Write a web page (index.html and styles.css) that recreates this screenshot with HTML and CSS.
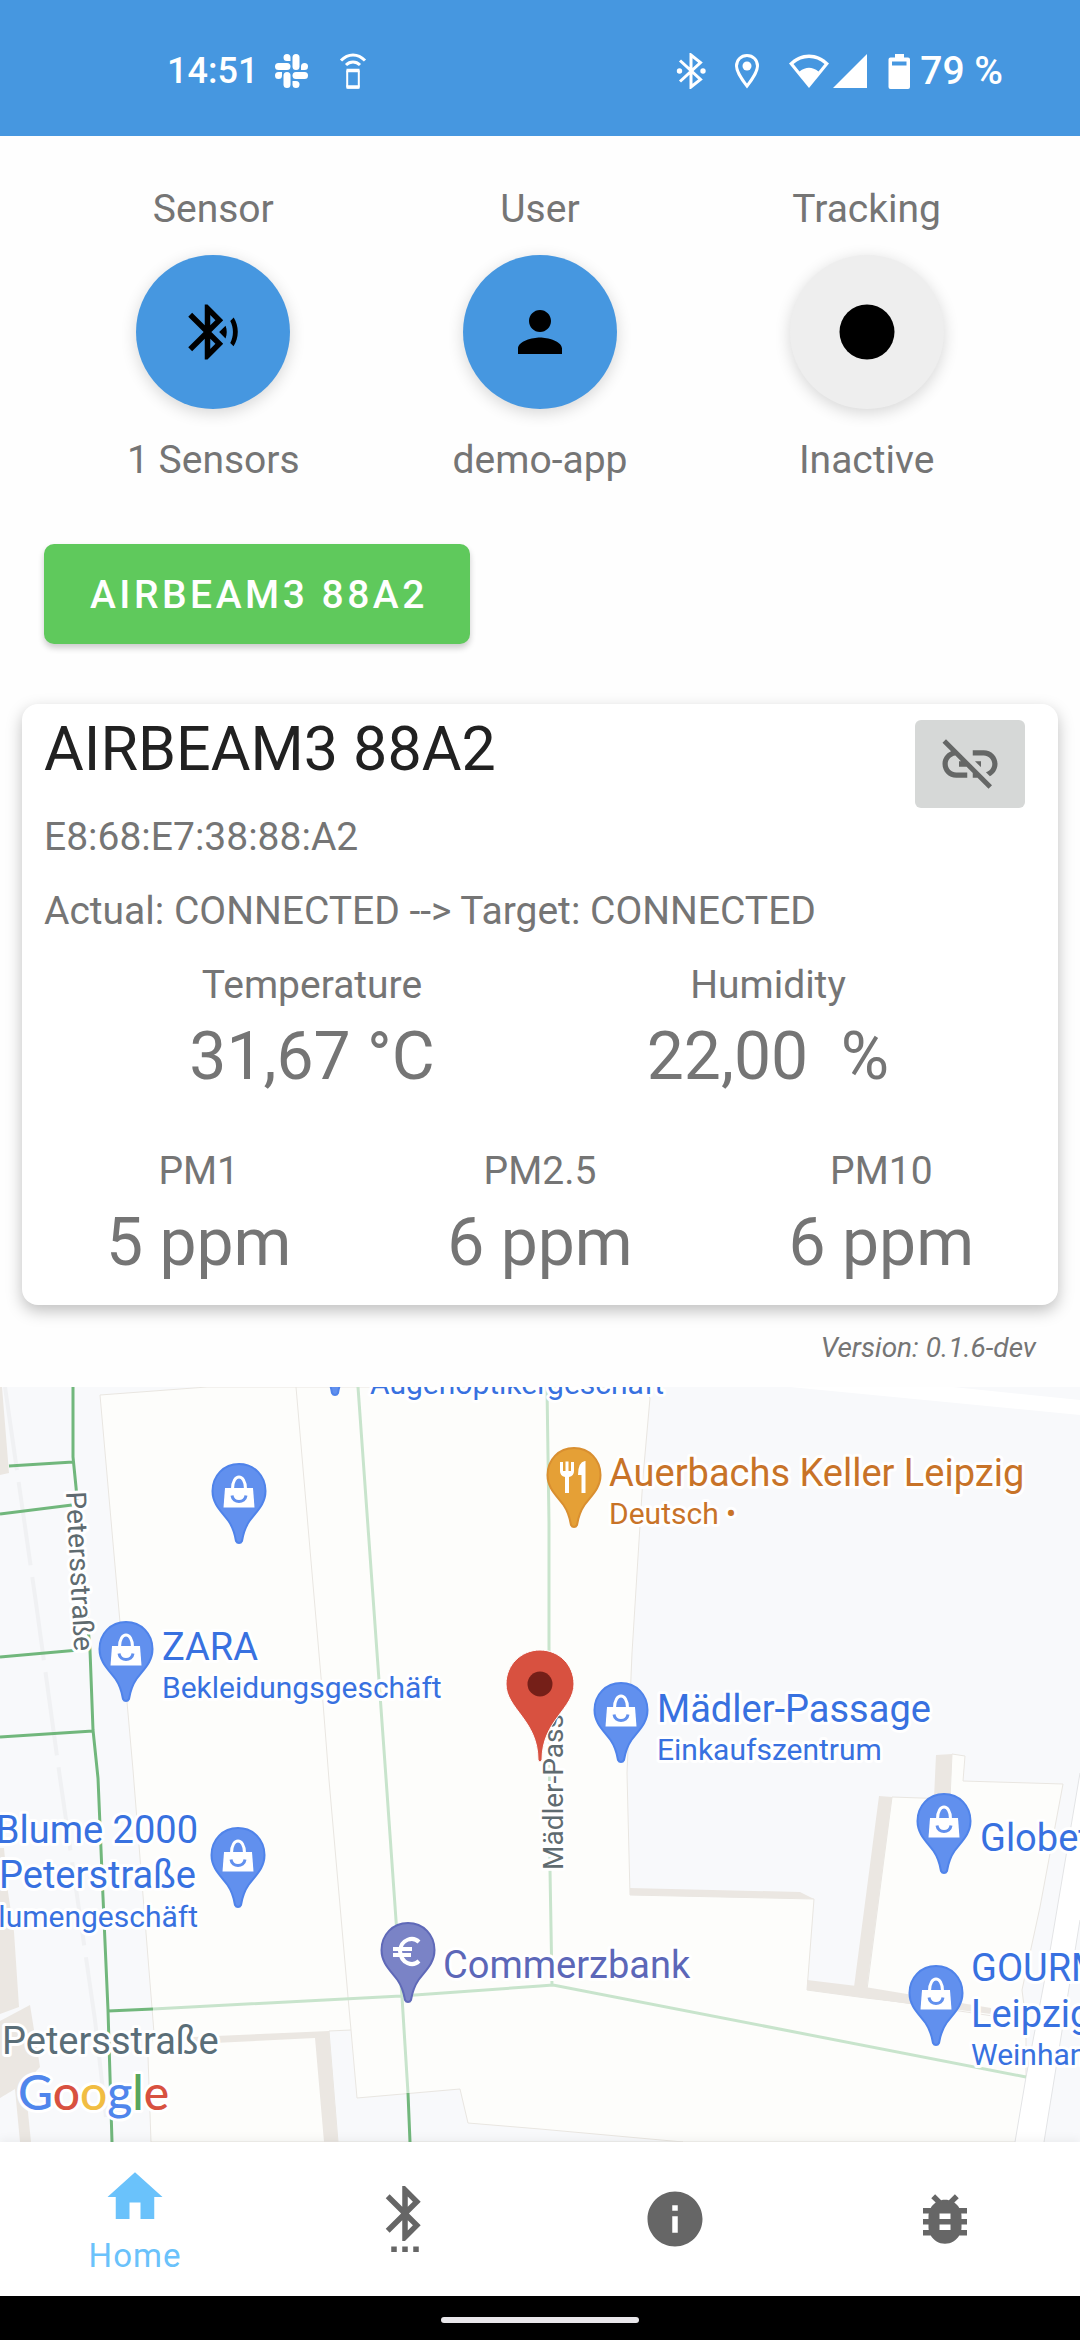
FILE: index.html
```html
<!DOCTYPE html>
<html lang="en">
<head>
<meta charset="utf-8">
<meta name="viewport" content="width=device-width, initial-scale=1">
<title>AirBeam sensors</title>
<link rel="stylesheet" href="styles.css">
</head>
<body>
<header class="statusbar">
  <div class="status-left">
    <span class="clock">14:51</span>
    <svg class="slack" width="35" height="36" viewBox="0 0 35 36" fill="#fff" aria-hidden="true">
      <path d="M13 1a3.500 3.500 0 0 1 3.500 3.500V8H13a3.500 3.500 0 0 1 0-7z"/>
      <rect x="1" y="10" width="15.500" height="7" rx="3.500"/>
      <rect x="18.500" y="1" width="7" height="16" rx="3.500"/>
      <path d="M34 13.500a3.500 3.500 0 0 1-3.500 3.500H27v-3.500a3.500 3.500 0 0 1 7 0z"/>
      <rect x="18.500" y="19" width="15.500" height="7" rx="3.500"/>
      <path d="M22 35a3.500 3.500 0 0 1-3.500-3.500V28H22a3.500 3.500 0 0 1 0 7z"/>
      <rect x="9.500" y="19" width="7" height="16" rx="3.500"/>
      <path d="M1 22.500A3.500 3.500 0 0 1 4.500 19H8v3.500a3.500 3.500 0 0 1-7 0z"/>
    </svg>
    <svg class="remote" width="28" height="38" viewBox="0 0 28 38" fill="none" stroke="#fff" aria-hidden="true">
      <path stroke-width="3" d="M2 8.500C9 1 19 1 26 8.500M7 13C11 9 17 9 21 13"/>
      <rect x="8.200" y="18.500" width="11.600" height="17" rx="1" stroke-width="2"/>
      <path stroke-width="3.500" d="M7.500 18.500h13M7.500 35h13"/>
    </svg>
  </div>
  <div class="status-right">
    <svg width="30" height="36" viewBox="0 0 30 36" aria-hidden="true">
      <path d="M4 7.500 24.500 26.500 15 34V2l9.500 7.500L4 28.500" fill="none" stroke="#fff" stroke-width="3"/>
      <circle cx="3.500" cy="18" r="2.700" fill="#fff"/><circle cx="27" cy="18" r="2.700" fill="#fff"/>
    </svg>
    <svg width="26" height="36" viewBox="0 0 26 36" aria-hidden="true">
      <path d="M13 2.500c-6 0-10.500 4.500-10.500 10.500C2.500 20 13 33 13 33s10.500-13 10.500-20c0-6-4.500-10.500-10.500-10.500z" fill="none" stroke="#fff" stroke-width="3"/>
      <circle cx="13" cy="13" r="4.500" fill="#fff"/>
    </svg>
    <svg width="80" height="36" viewBox="0 0 80 36" aria-hidden="true">
      <path d="M1 10.500C13-1.500 29-1.500 41 10.500L21 35z" fill="#fff"/>
      <path d="M5.500 11C14 3 28 3 36.500 11L30.500 18.500C24 13.500 18 13.500 11.500 18.500z" fill="#4697e0"/>
      <path d="M79 1v34H45z" fill="#fff"/>
    </svg>
    <svg class="battery" width="22" height="36" viewBox="0 0 22 36" aria-hidden="true">
      <path d="M7 1h9v3.500h4q2 0 2 2V34q0 2-2 2H2.500q-2 0-2-2V6.500q0-2 2-2H7z" fill="#fff"/>
      <path d="M4 8.500h14.500v4H4z" fill="#4697e0"/>
    </svg>
    <span class="charge">79 %</span>
  </div>
</header>

<main class="content">
  <section class="controls">
    <div class="control">
      <span id="sensor-label">Sensor</span>
      <button class="round" type="button" aria-labelledby="sensor-label">
        <svg class="icon" viewBox="0 0 24 24"><path d="M14.240 12.010l2.320 2.320c.28-.72.44-1.510.44-2.330 0-.82-.16-1.590-.43-2.310l-2.330 2.320zm5.290-5.300l-1.260 1.260c.63 1.210.98 2.570.98 4.020s-.36 2.820-.98 4.020l1.200 1.200c.97-1.540 1.540-3.360 1.540-5.310-.01-1.890-.55-3.670-1.480-5.190zm-3.820 1L10 2H9v7.590L4.410 5 3 6.410 8.590 12 3 17.590 4.410 19 9 14.410V22h1l5.710-5.710-4.300-4.290 4.300-4.290zM11 5.830l1.880 1.880L11 9.590V5.830zm1.880 10.460L11 18.170v-3.760l1.880 1.880z"/></svg>
      </button>
      <span>1 Sensors</span>
    </div>
    <div class="control">
      <span id="user-label">User</span>
      <button class="round" type="button" aria-labelledby="user-label">
        <svg class="icon" viewBox="0 0 24 24"><path d="M12 12c2.210 0 4-1.790 4-4s-1.790-4-4-4-4 1.790-4 4 1.790 4 4 4zm0 2c-2.670 0-8 1.340-8 4v2h16v-2c0-2.660-5.330-4-8-4z"/></svg>
      </button>
      <span>demo-app</span>
    </div>
    <div class="control">
      <span id="tracking-label">Tracking</span>
      <button class="round round-off" type="button" aria-labelledby="tracking-label">
        <svg class="icon" viewBox="0 0 24 24"><circle cx="12" cy="12" r="10"/></svg>
      </button>
      <span>Inactive</span>
    </div>
  </section>

  <button class="sensor-button" type="button">AIRBEAM3 88A2</button>

  <article class="card">
    <div class="card-head">
      <h1 class="title">AIRBEAM3 88A2</h1>
      <button class="unlink" type="button" aria-label="Disconnect">
        <svg class="icon" viewBox="0 0 24 24"><path d="M17 7h-4v1.900h4c1.710 0 3.100 1.390 3.100 3.100 0 1.430-.98 2.630-2.310 2.980l1.460 1.460C20.880 15.610 22 13.950 22 12c0-2.760-2.240-5-5-5zm-1 4h-2.190l2 2H16v-2zM2 4.270l3.110 3.110C3.290 8.120 2 9.910 2 12c0 2.760 2.240 5 5 5h4v-1.900H7c-1.710 0-3.100-1.390-3.100-3.100 0-1.590 1.210-2.900 2.760-3.070L8.730 11H8v2h2.730L13 15.270V17h1.730l4.010 4L20 19.740 3.270 3 2 4.270z"/></svg>
      </button>
    </div>
    <p class="line">E8:68:E7:38:88:A2</p>
    <p class="line">Actual: CONNECTED --&gt; Target: CONNECTED</p>
    <div class="climate">
      <div class="reading"><span>Temperature</span><span class="value">31,67 °C</span></div>
      <div class="reading"><span>Humidity</span><span class="value">22,00&nbsp; %</span></div>
    </div>
    <div class="particles">
      <div class="reading"><span>PM1</span><span class="value">5 ppm</span></div>
      <div class="reading"><span>PM2.5</span><span class="value">6 ppm</span></div>
      <div class="reading"><span>PM10</span><span class="value">6 ppm</span></div>
    </div>
  </article>
  <p class="version">Version: 0.1.6-dev</p>
</main>

<svg class="map" viewBox="0 0 1080 755" preserveAspectRatio="xMidYMid slice" role="img" aria-label="Map">
  <defs>
    <path id="drop" d="M0 1C15.500 1 26.500 13 26.500 28 26.500 41 18 48 10.500 58 5 66 4 72 3 78Q2 80 0 80 -2 80-3 78C-4 72-5 66-10.500 58-18 48-26.500 41-26.500 28-26.500 13-15.500 1 0 1Z" stroke-width="2"/>
    <g id="shop">
      <use href="#drop" fill="#6190ee" stroke="#4f83ea"/>
      <path d="M-14 25H14L15.500 44.500H-15.500Z" fill="#fff"/>
      <path d="M-6.500 26C-6.500 10 6.500 10 6.500 26" fill="none" stroke="#fff" stroke-width="3"/>
      <path d="M-7 32.500C-6 40.500 6 40.500 7 32.500" fill="none" stroke="#6190ee" stroke-width="3"/>
    </g>
  </defs>
  <rect width="1080" height="755" fill="#f8f9fb"/>
  <!-- buildings -->
  <g fill="#fdfdfb" stroke="#e9e6e1">
    <path d="M100 8 207 0H640L650 11 643 90 632 266 627 386 630 508 814 512 807 603 866 611 1026 630V755H151L148 670 154 646 133 383Z"/>
    <path d="M952 367 965 369 963 394 1063 397 1040 520 1022 603 1026 634 866 610 892 410 950 412Z"/>
    <path d="M296 0 321 290 329 393 348 610 351 643" fill="none"/>
    <path d="M338 755 329 644 351 643 357 711 460 702 468 736 540 742 683 755Z" fill="#f8f9fb"/>
  </g>
  <g fill="#ebe7e2">
    <path d="M193 650 329 644 338 755H324L315 651 193 657Z"/>
    <path d="M630 501 800 505 814 512 630 508ZM879 409 892 410 866 607 854 600ZM936 368 952 367 950 412 934 411Z"/>
    <path d="M807 593 865 600 991 621V627L866 611 807 603Z"/>
    <path d="M0 0H2L9 86 0 88ZM0 461H4L8 505 14 545 19 620 0 627ZM0 634 30 618 40 680 25 696 31 755H20L15 702 0 711Z"/>
  </g>
  <!-- roads -->
  <g fill="#fff">
    <path d="M790 0H953L1080 13V28Z"/>
    <path d="M1080 386 1049 570 1026 690 1015 755H1044L1080 533Z"/>
    <path d="M1080 386 1049 570 1026 690 1015 755M1044 755 1080 533" fill="none" stroke="#e3e4e6"/>
  </g>
  <path d="M5 0 36 216 60 391 95 633 106 730" fill="none" stroke="#f0f1f3" stroke-width="4" stroke-dasharray="84 12"/>
  <!-- footpaths -->
  <g fill="none" stroke="#71b77c" stroke-width="3">
    <path d="M73 0V70L76 100 90 263 93 343 98 391 103 510 108 623 112 755M9 79 73 75M0 127 72 118M0 270 90 262M0 350 93 344M108 624 153 622M408 706 410 755"/>
    <path stroke="#c8e4cc" d="M153 622 401 609 540 599 553 598 1026 690M358 0 368 140 386 391 396 533 402 610 408 706M547 0 549 136V260L550 483 552 598"/>
  </g>
  <g class="street">
    <text class="street-small" transform="translate(66 105) rotate(87)">Petersstraße</text>
    <text class="street-small" transform="translate(563 483) rotate(-90)">Mädler-Passage</text>
    <text class="street-name" x="2" y="667">Petersstraße</text>
  </g>
  <!-- places -->
  <use href="#shop" x="335" y="-72"/>
  <use href="#shop" x="239" y="76"/>
  <use href="#shop" x="126" y="234"/>
  <use href="#shop" x="238" y="440"/>
  <use href="#shop" x="621" y="295"/>
  <use href="#shop" x="944" y="406"/>
  <use href="#shop" x="936" y="578"/>
  <g transform="translate(574 60)">
    <use href="#drop" fill="#e5a036" stroke="#d98f30"/>
    <path d="M-14 15v9q0 5 5 6v16h4V30q5-1 5-6v-9h-3v9h-2.500v-9.500h-3V24H-11v-9zM11 14q-7 1-7 14h3.500v18h4V14z" fill="#fff"/>
  </g>
  <g transform="translate(408 535)">
    <use href="#drop" fill="#7a83c6" stroke="#5f69b8"/>
    <path d="M11 20C5 14-7 17-8 29-7 42 5 45 11 39M-15 27H4M-15 33H3" fill="none" stroke="#fff" stroke-width="4"/>
  </g>
  <g class="place">
    <text class="place-kind" x="370" y="7">Augenoptikergeschäft</text>
    <text x="162" y="273">ZARA</text>
    <text class="place-kind" x="162" y="311">Bekleidungsgeschäft</text>
    <text x="657" y="335">Mädler-Passage</text>
    <text class="place-kind" x="657" y="373">Einkaufszentrum</text>
    <g text-anchor="end">
      <text x="198" y="456">Blume 2000</text>
      <text x="196" y="501">Peterstraße</text>
      <text class="place-kind" x="198" y="540">Blumengeschäft</text>
    </g>
    <text x="980" y="464">Globetrotter</text>
    <text x="971" y="594">GOURMET</text>
    <text x="971" y="640">Leipzig</text>
    <text class="place-kind" x="971" y="678">Weinhandlung</text>
    <text class="bank" x="443" y="591">Commerzbank</text>
    <text class="food" x="609" y="99">Auerbachs Keller Leipzig</text>
    <text class="food place-kind" x="609" y="137">Deutsch •</text>
  </g>
  <path d="M540 263c19 0 34 15 34 34 0 25-32 36-32 76q-2 4-4 0c0-40-32-51-32-76 0-19 15-34 34-34z" fill="#d85140" stroke="#fff"/>
  <circle cx="540" cy="297" r="12.500" fill="#751f18"/>
  <text class="google" x="18" y="723"><tspan fill="#5086ec">G</tspan><tspan fill="#d85140">o</tspan><tspan fill="#f1bd42">o</tspan><tspan fill="#5086ec">g</tspan><tspan fill="#58a65c">l</tspan><tspan fill="#d85140">e</tspan></text>
</svg>

<nav class="tabs">
  <a class="tab tab-active" href="#home">
    <svg class="icon" viewBox="0 0 24 24" aria-hidden="true"><path d="M10 20v-6h4v6h5v-8h3L12 3 2 12h3v8z"/></svg>
    <span>Home</span>
  </a>
  <a class="tab" href="#bluetooth" aria-label="Bluetooth">
    <svg class="icon" viewBox="0 0 24 24"><path d="M11 24h2v-2h-2v2zm-4 0h2v-2H7v2zm8 0h2v-2h-2v2zm2.710-18.290L12 0h-1v7.590L6.410 3 5 4.410 10.590 10 5 15.590 6.410 17 11 12.410V20h1l5.710-5.710-4.300-4.290 4.300-4.290zM13 3.830l1.880 1.880L13 7.590V3.830zm1.880 10.460L13 16.170v-3.760l1.880 1.880z"/></svg>
  </a>
  <a class="tab" href="#info" aria-label="Info">
    <svg class="icon" viewBox="0 0 24 24"><path d="M12 2C6.480 2 2 6.480 2 12s4.480 10 10 10 10-4.480 10-10S17.520 2 12 2zm1 15h-2v-6h2v6zm0-8h-2V7h2v2z"/></svg>
  </a>
  <a class="tab" href="#debug" aria-label="Debug">
    <svg class="icon" viewBox="0 0 24 24"><path d="M20 8h-2.810c-.45-.78-1.070-1.450-1.820-1.960L17 4.410 15.590 3l-2.170 2.170C12.960 5.060 12.490 5 12 5c-.49 0-.96.06-1.410.17L8.410 3 7 4.410l1.620 1.630C7.880 6.550 7.260 7.220 6.810 8H4v2h2.090c-.05.33-.09.66-.09 1v1H4v2h2v1c0 .34.04.67.09 1H4v2h2.810c1.040 1.790 2.970 3 5.190 3s4.150-1.210 5.190-3H20v-2h-2.090c.05-.33.09-.66.09-1v-1h2v-2h-2v-1c0-.34-.04-.67-.09-1H20V8zm-6 8h-4v-2h4v2zm0-4h-4v-2h4v2z"/></svg>
  </a>
</nav>
<footer class="gesture"><div class="handle"></div></footer>
</body>
</html>
```
FILE: styles.css
```css
* {
  box-sizing: border-box;
}

body {
  margin: 0;
  min-height: 100vh;
  display: flex;
  flex-direction: column;
  background: #fefefe;
  color: #757575;
  font: 39px/46px Roboto, sans-serif;
}

button {
  border: 0;
  padding: 0;
  font: inherit;
}

p,
h1 {
  margin: 0;
  font-weight: 400;
}

.icon {
  display: block;
  width: 66px;
  height: 66px;
  fill: currentColor;
}

.statusbar {
  display: flex;
  justify-content: space-between;
  align-items: center;
  height: 136px;
  padding: 5px 77px 0 167px;
  background: #4697e0;
  color: #fff;
  font-weight: 500;
}

.status-left,
.status-right {
  display: flex;
  align-items: center;
}

.status-right {
  gap: 28px;
}

.clock {
  font-size: 36px;
}

.charge {
  font-size: 39px;
}

.slack {
  margin-left: 16px;
}

.remote {
  margin-left: 30px;
}

.battery {
  margin: 0 -18px 0 -8px;
}

.controls {
  display: grid;
  grid-template-columns: repeat(3, 1fr);
  padding: 50px 50px 0;
}

.control {
  display: flex;
  flex-direction: column;
  align-items: center;
}

.round {
  display: grid;
  place-items: center;
  width: 154px;
  height: 154px;
  margin: 23px 0 28px;
  border-radius: 50%;
  background: #4697e0;
  color: #000;
  box-shadow: 0 4px 16px rgba(0, 0, 0, 0.16);
}

.round-off {
  background: #eee;
}

.sensor-button {
  height: 100px;
  margin: 61px 44px 0;
  padding: 2px 42px 0 46px;
  border-radius: 10px;
  background: #5fc95c;
  color: #fff;
  font-weight: 500;
  letter-spacing: 0.09em;
  box-shadow: 0 4px 6px rgba(0, 0, 0, 0.2);
}

.card {
  display: flex;
  flex-direction: column;
  gap: 28px;
  margin: 60px 22px 0;
  padding: 8px 0 23px;
  border-radius: 16px;
  background: #fff;
  box-shadow: 0 6px 16px rgba(0, 0, 0, 0.25);
}

.card-head {
  display: flex;
  justify-content: space-between;
  height: 74px;
  padding: 0 33px 0 22px;
}

.title {
  color: #212121;
  font-size: 61px;
  line-height: 74px;
}

.unlink {
  display: grid;
  place-items: center;
  width: 110px;
  height: 88px;
  margin-top: 8px;
  border-radius: 6px;
  background: #d6d8d7;
  color: #656766;
}

.line {
  padding: 0 22px;
}

.climate,
.particles {
  display: grid;
  grid-auto-columns: 1fr;
  grid-auto-flow: column;
}

.climate {
  padding: 0 62px;
}

.particles {
  margin-top: 24px;
  padding: 0 6px;
}

.reading {
  display: flex;
  flex-direction: column;
  align-items: center;
  gap: 10px;
}

.value {
  font-size: 66px;
  line-height: 78px;
}

.version {
  margin: 26px 44px 22px;
  font-size: 28px;
  line-height: 34px;
  font-style: italic;
  text-align: right;
}

.map {
  display: block;
  flex: 1 1 400px;
  width: 100%;
  min-height: 400px;
}

.street,
.place,
.google {
  stroke: #fff;
  stroke-width: 6px;
  stroke-linejoin: round;
  paint-order: stroke;
}

.street-small {
  fill: #5f6b70;
  font-size: 28px;
}

.street-name {
  fill: #5a6e78;
  font-size: 38px;
}

.place {
  fill: #3871e0;
  font-size: 38px;
}

.place-kind {
  font-size: 30px;
}

.food {
  fill: #c87328;
}

.bank {
  fill: #5c67b8;
}

.google {
  font-family: Lato, sans-serif;
  font-size: 48px;
  font-weight: 500;
}

.tabs {
  display: grid;
  grid-template-columns: repeat(4, 1fr);
  height: 154px;
  background: #fff;
  box-shadow: 0 -2px 10px rgba(0, 0, 0, 0.06);
}

.tab {
  display: flex;
  flex-direction: column;
  align-items: center;
  justify-content: center;
  gap: 8px;
  color: #666;
  font-size: 33px;
  line-height: 36px;
  letter-spacing: 1px;
  text-decoration: none;
}

.tab-active {
  color: #6ac2fb;
}

.gesture {
  display: grid;
  place-items: center;
  height: 44px;
  padding-top: 4px;
  background: #000;
}

.handle {
  width: 198px;
  height: 6px;
  border-radius: 3px;
  background: #e8e6ea;
}
```
